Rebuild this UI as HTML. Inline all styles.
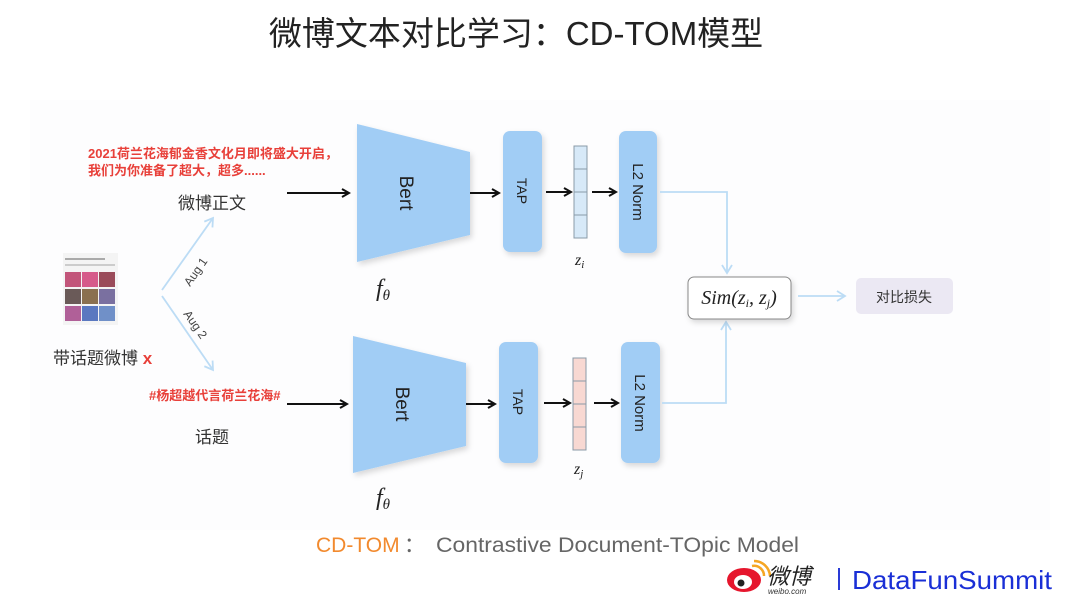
<!DOCTYPE html>
<html><head><meta charset="utf-8"><style>
html,body{margin:0;padding:0;background:#fff;}
body{width:1080px;height:603px;overflow:hidden;font-family:"Liberation Sans","Noto Sans CJK SC",sans-serif;}
</style></head><body>
<svg width="1080" height="603" viewBox="0 0 1080 603" xmlns="http://www.w3.org/2000/svg" font-family="Liberation Sans, Noto Sans CJK SC, sans-serif">
<defs>
<marker id="ab" markerWidth="10" markerHeight="10" refX="8" refY="5" orient="auto" markerUnits="userSpaceOnUse"><path d="M1,1 L8,5 L1,9" fill="none" stroke="#111" stroke-width="2"/></marker>
<marker id="al" markerWidth="12" markerHeight="12" refX="9" refY="6" orient="auto" markerUnits="userSpaceOnUse"><path d="M1,1 L9,6 L1,11" fill="none" stroke="#bcdcf5" stroke-width="1.8"/></marker>
<filter id="sh" x="-20%" y="-20%" width="140%" height="140%"><feDropShadow dx="2" dy="3" stdDeviation="3" flood-color="#000" flood-opacity="0.15"/></filter>
</defs>
<rect x="0" y="0" width="1080" height="603" fill="#fff"/>
<rect x="30" y="100" width="1020" height="430" fill="#fdfdfe"/>
<text x="516" y="45" font-size="33" text-anchor="middle" fill="#222">微博文本对比学习：CD-TOM模型</text>

<!-- left -->
<text x="88" y="158" font-size="13" fill="#e8403a" font-weight="bold">2021荷兰花海郁金香文化月即将盛大开启，</text>
<text x="88" y="175" font-size="13" fill="#e8403a" font-weight="bold">我们为你准备了超大，超多......</text>
<text x="178" y="209" font-size="17" fill="#333">微博正文</text>
<rect x="63" y="253" width="55" height="72" fill="#f4f4f4"/>
<g>
<rect x="65" y="272" width="16" height="15" fill="#c2557a"/><rect x="82" y="272" width="16" height="15" fill="#d65a8a"/><rect x="99" y="272" width="16" height="15" fill="#9a4b5a"/>
<rect x="65" y="289" width="16" height="15" fill="#6a5a58"/><rect x="82" y="289" width="16" height="15" fill="#8a7050"/><rect x="99" y="289" width="16" height="15" fill="#7a70a0"/>
<rect x="65" y="306" width="16" height="15" fill="#b06098"/><rect x="82" y="306" width="16" height="15" fill="#5a78c0"/><rect x="99" y="306" width="16" height="15" fill="#7090c8"/>
<rect x="65" y="258" width="40" height="2" fill="#aaa"/><rect x="65" y="264" width="50" height="2" fill="#ccc"/>
</g>
<path d="M162,290 L213,218" stroke="#bcdcf5" stroke-width="1.8" fill="none" marker-end="url(#al)"/>
<path d="M162,296 L213,370" stroke="#bcdcf5" stroke-width="1.8" fill="none" marker-end="url(#al)"/>
<text x="0" y="0" font-size="12" fill="#444" transform="translate(190,287) rotate(-55)">Aug 1</text>
<text x="0" y="0" font-size="12" fill="#444" transform="translate(183,314) rotate(55)">Aug 2</text>
<text x="53" y="364" font-size="17" fill="#333">带话题微博 <tspan fill="#e8403a" font-weight="bold">x</tspan></text>
<text x="149" y="400" font-size="13" fill="#e8403a" font-weight="bold">#杨超越代言荷兰花海#</text>
<text x="195" y="443" font-size="17" fill="#333">话题</text>

<!-- arrows in -->
<line x1="287" y1="193" x2="349" y2="193" stroke="#111" stroke-width="2" marker-end="url(#ab)"/>
<line x1="287" y1="404" x2="347" y2="404" stroke="#111" stroke-width="2" marker-end="url(#ab)"/>

<!-- Bert -->
<polygon points="357,124 470,152 470,235 357,262" fill="#a1cdf5" filter="url(#sh)"/>
<polygon points="353,336 466,363 466,446 353,473" fill="#a1cdf5" filter="url(#sh)"/>
<text font-size="19" fill="#222" transform="translate(407,193) rotate(90)" text-anchor="middle" dy="7">Bert</text>
<text font-size="19" fill="#222" transform="translate(403,404) rotate(90)" text-anchor="middle" dy="7">Bert</text>
<text x="376" y="296" font-size="24" font-style="italic" font-family="Liberation Serif, serif" fill="#222">f<tspan font-size="15" dy="4">θ</tspan></text>
<text x="376" y="505" font-size="24" font-style="italic" font-family="Liberation Serif, serif" fill="#222">f<tspan font-size="15" dy="4">θ</tspan></text>

<line x1="470" y1="193" x2="499" y2="193" stroke="#111" stroke-width="2" marker-end="url(#ab)"/>
<line x1="466" y1="404" x2="495" y2="404" stroke="#111" stroke-width="2" marker-end="url(#ab)"/>

<!-- TAP -->
<rect x="503" y="131" width="39" height="121" rx="7" fill="#a1cdf5" filter="url(#sh)"/>
<rect x="499" y="342" width="39" height="121" rx="7" fill="#a1cdf5" filter="url(#sh)"/>
<text font-size="14" fill="#222" transform="translate(522,191) rotate(90)" text-anchor="middle" dy="5">TAP</text>
<text font-size="14" fill="#222" transform="translate(518,402) rotate(90)" text-anchor="middle" dy="5">TAP</text>

<line x1="546" y1="192" x2="571" y2="192" stroke="#111" stroke-width="2" marker-end="url(#ab)"/>
<line x1="544" y1="403" x2="570" y2="403" stroke="#111" stroke-width="2" marker-end="url(#ab)"/>

<!-- vectors -->
<g stroke="#8a9aa8" stroke-width="1">
<rect x="574" y="146" width="13" height="92" fill="#d7e9f8"/>
<line x1="574" y1="169" x2="587" y2="169"/><line x1="574" y1="192" x2="587" y2="192"/><line x1="574" y1="215" x2="587" y2="215"/>
<rect x="573" y="358" width="13" height="92" fill="#f8d8d2"/>
<line x1="573" y1="381" x2="586" y2="381"/><line x1="573" y1="404" x2="586" y2="404"/><line x1="573" y1="427" x2="586" y2="427"/>
</g>
<text x="575" y="265" font-size="16" font-style="italic" font-family="Liberation Serif, serif" fill="#222">z<tspan font-size="11" dy="3">i</tspan></text>
<text x="574" y="474" font-size="16" font-style="italic" font-family="Liberation Serif, serif" fill="#222">z<tspan font-size="11" dy="3">j</tspan></text>

<line x1="592" y1="192" x2="616" y2="192" stroke="#111" stroke-width="2" marker-end="url(#ab)"/>
<line x1="594" y1="403" x2="618" y2="403" stroke="#111" stroke-width="2" marker-end="url(#ab)"/>

<!-- L2 Norm -->
<rect x="619" y="131" width="38" height="122" rx="7" fill="#a1cdf5" filter="url(#sh)"/>
<rect x="621" y="342" width="39" height="121" rx="7" fill="#a1cdf5" filter="url(#sh)"/>
<text font-size="15" fill="#222" transform="translate(638,192) rotate(90)" text-anchor="middle" dy="5">L2 Norm</text>
<text font-size="15" fill="#222" transform="translate(640,403) rotate(90)" text-anchor="middle" dy="5">L2 Norm</text>

<path d="M660,192 L727,192 L727,273" stroke="#bcdcf5" stroke-width="1.8" fill="none" marker-end="url(#al)"/>
<path d="M662,403 L726,403 L726,322" stroke="#bcdcf5" stroke-width="1.8" fill="none" marker-end="url(#al)"/>

<rect x="688" y="277" width="103" height="42" rx="6" fill="#fff" stroke="#888" stroke-width="1" filter="url(#sh)"/>
<text x="739" y="304" font-size="20" font-style="italic" font-family="Liberation Serif, serif" fill="#222" text-anchor="middle">Sim(z<tspan font-size="12" dy="3">i</tspan><tspan dy="-3">, z</tspan><tspan font-size="12" dy="3">j</tspan><tspan dy="-3">)</tspan></text>

<line x1="798" y1="296" x2="845" y2="296" stroke="#bcdcf5" stroke-width="1.8" marker-end="url(#al)"/>
<rect x="856" y="278" width="97" height="36" rx="5" fill="#ebe8f3"/>
<text x="904" y="302" font-size="14" fill="#333" text-anchor="middle">对比损失</text>

<!-- footer -->
<text x="316" y="552" font-size="21" fill="#f28a2e">CD-TOM</text>
<text x="404" y="552" font-size="21" fill="#666">：</text>
<text x="436" y="552" font-size="21" fill="#666" textLength="363" lengthAdjust="spacingAndGlyphs">Contrastive Document-TOpic Model</text>
<g>
<ellipse cx="744" cy="580" rx="17" ry="12" fill="#e6162d"/>
<ellipse cx="743" cy="582" rx="9" ry="7" fill="#fff"/>
<circle cx="741" cy="583" r="3.5" fill="#222"/>
<path d="M752,566 a10,10 0 0 1 12,10" stroke="#f5a623" stroke-width="2.5" fill="none"/>
<path d="M754,561 a16,16 0 0 1 16,15" stroke="#f5a623" stroke-width="2.5" fill="none"/>
</g>
<text x="767" y="584" font-size="22" font-style="italic" fill="#222">微博</text>
<text x="768" y="594" font-size="8" font-style="italic" fill="#333">weibo.com</text>
<rect x="838" y="568" width="2" height="22" fill="#2a3bd6"/>
<text x="852" y="589" font-size="26" fill="#1a2fd6" textLength="200" lengthAdjust="spacingAndGlyphs">DataFunSummit</text>
</svg>
</body></html>
